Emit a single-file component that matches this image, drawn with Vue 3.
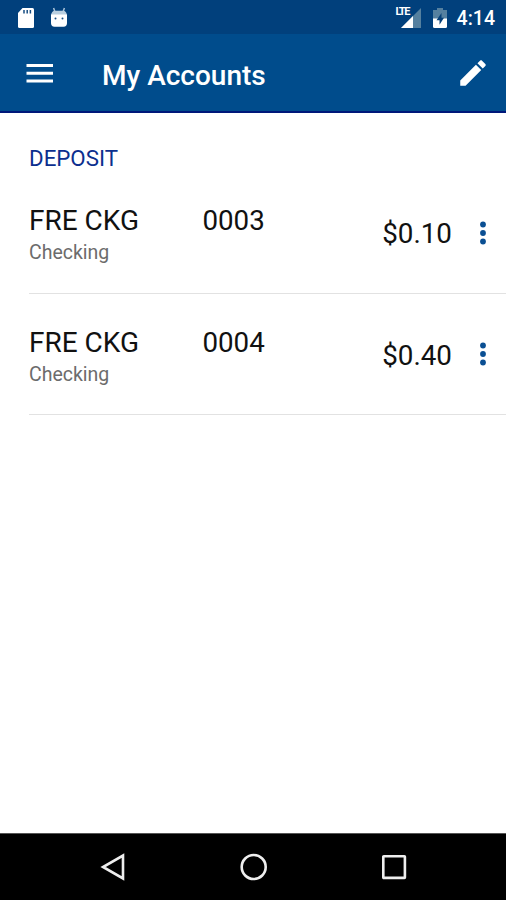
<script setup>
const accounts = [
  { name: 'FRE CKG', number: '0003', type: 'Checking', balance: '$0.10' },
  { name: 'FRE CKG', number: '0004', type: 'Checking', balance: '$0.40' },
]
</script>

<template>
  <div class="screen">
    <div class="status">
      <svg class="sd" width="18" height="22" viewBox="0 0 18 22">
        <path d="M5.500 1H15.500q1.500 0 1.500 1.500V19.500q0 1.500-1.500 1.500H2.500Q1 21 1 19.500V6z" fill="#fff" />
        <path d="M7 3v3.500M10.200 3v3.500M13.400 3v3.500" stroke="#164d83" stroke-width="1.500" />
      </svg>
      <svg class="droid" width="18" height="22" viewBox="0 0 18 22">
        <path d="M5 5L3.600 1M13 5L14.400 1" stroke="#a9c2d8" stroke-width="1.500" />
        <path d="M1 8.500Q1.500 3.800 5 3.800h8q3.500 0 4 4.700z" fill="#b9cfe0" />
        <path d="M1 7.500h16v8.500q0 3.700-3.500 3.700h-9Q1 19.700 1 16z" fill="#fff" />
        <circle cx="5.500" cy="11.500" r="1" fill="#164d83" />
        <circle cx="12.500" cy="11.500" r="1" fill="#164d83" />
      </svg>
      <div class="spacer"></div>
      <div class="signal">
        <svg width="22" height="20" viewBox="0 0 22 20">
          <path d="M21 0V20H1z" fill="#55809f" />
          <path d="M13 8V20H1z" fill="#fff" />
        </svg>
        <span class="lte">LTE</span>
      </div>
      <svg class="battery" width="16" height="22" viewBox="0 0 16 22">
        <path d="M5 1h6v2h4v9H1V3h4z" fill="#55809f" />
        <path d="M1 11.500h14V19.500q0 1.500-1.500 1.500h-11Q1 21 1 19.500z" fill="#fff" />
        <path d="M9.500 6L4.500 13.300h3V17.800L12 10.800H9.500z" fill="#064079" />
      </svg>
      <span class="clock">4:14</span>
    </div>

    <header class="toolbar">
      <svg class="menu" width="28" height="20" viewBox="0 0 28 20">
        <path d="M0.500 2.500h26.500M0.500 10.200h26.500M0.500 17.900h26.500" stroke="#fff" stroke-width="3" />
      </svg>
      <h1 class="title">My Accounts</h1>
      <svg class="pencil" width="34" height="34" viewBox="0 0 24 24">
        <path fill="#fff" d="M3 17.250V21h3.750L17.810 9.940l-3.750-3.750L3 17.250zM20.710 7.040c.39-.39.39-1.020 0-1.410l-2.340-2.340c-.39-.39-1.020-.39-1.410 0l-1.830 1.830 3.750 3.750 1.830-1.830z" />
      </svg>
    </header>

    <main class="content">
      <h2 class="section">DEPOSIT</h2>
      <div v-for="a in accounts" :key="a.number" class="row">
        <div class="info">
          <div class="line">
            <span class="name">{{ a.name }}</span>
            <span class="number">{{ a.number }}</span>
          </div>
          <div class="type">{{ a.type }}</div>
        </div>
        <span class="balance">{{ a.balance }}</span>
        <svg class="more" width="8" height="24" viewBox="0 0 8 24">
          <circle cx="4" cy="3.500" r="2.900" />
          <circle cx="4" cy="12" r="2.900" />
          <circle cx="4" cy="20.500" r="2.900" />
        </svg>
      </div>
    </main>

    <nav class="navbar">
      <svg width="28" height="30" viewBox="0 0 28 30">
        <path d="M24 3.500V26.500L4 15z" />
      </svg>
      <svg width="28" height="30" viewBox="0 0 28 30">
        <circle cx="13.700" cy="15" r="12" />
      </svg>
      <svg width="28" height="30" viewBox="0 0 28 30">
        <rect x="3.300" y="4.300" width="21.600" height="21.600" rx="0.500" />
      </svg>
    </nav>
  </div>
</template>

<style>
body {
  margin: 0;
}
</style>

<style scoped>
.screen {
  width: 506px;
  height: 900px;
  display: flex;
  flex-direction: column;
  background: #fff;
  font-family: Roboto, sans-serif;
  overflow: hidden;
}
svg {
  display: block;
  flex: none;
}
.status {
  height: 34px;
  flex: none;
  display: flex;
  align-items: center;
  background: #01407c;
  box-sizing: border-box;
  padding: 1px 11px 0 17px;
}
.droid {
  margin-left: 15px;
}
.spacer {
  flex: 1;
}
.signal {
  position: relative;
  margin-right: 10px;
}
.lte {
  position: absolute;
  left: -4px;
  top: -1px;
  padding-right: 1px;
  background: #01407c;
  color: #fff;
  font-size: 11px;
  line-height: 9px;
  font-weight: 700;
  letter-spacing: -1.500px;
}
.battery {
  margin-right: 9px;
}
.clock {
  color: #fff;
  font-size: 19.500px;
  font-weight: 500;
  line-height: 34px;
  padding-top: 2px;
}
.toolbar {
  height: 79px;
  flex: none;
  box-sizing: border-box;
  border-bottom: 2px solid #00187a;
  background: #004c8c;
  display: flex;
  align-items: center;
  padding: 1px 16px 0 26px;
}
.title {
  margin: 5px 0 0 48px;
  flex: 1;
  color: #fff;
  font-size: 28px;
  font-weight: 500;
  line-height: 34px;
}
.content {
  flex: 1;
  padding-left: 29px;
}
.section {
  margin: 0;
  height: 59px;
  box-sizing: border-box;
  padding-top: 32px;
  font-size: 22.300px;
  line-height: 27px;
  font-weight: 400;
  color: #0c2f8e;
}
.row {
  height: 121.500px;
  box-sizing: border-box;
  border-bottom: 1.500px solid #e2e2e2;
  display: flex;
  align-items: center;
  padding-right: 19px;
}
.info {
  flex: 1;
  padding-top: 7px;
}
.line {
  display: flex;
  font-size: 28px;
  line-height: 34px;
  color: #111;
}
.name {
  width: 173.500px;
}
.number {
  font-size: 27.700px;
}
.type {
  font-size: 19.500px;
  line-height: 29px;
  color: #6c6c6c;
}
.balance {
  font-size: 27.800px;
  line-height: 34px;
  color: #111;
  padding-top: 4px;
}
.more {
  margin-left: 27px;
  margin-top: 1px;
  fill: #0a4f93;
}
.navbar {
  height: 67px;
  flex: none;
  box-sizing: border-box;
  border-top: 1px solid #555;
  background: #000;
  display: flex;
  align-items: center;
  justify-content: space-between;
  padding: 0 98px 1px 99px;
}
.navbar svg {
  fill: none;
  stroke: #eee;
  stroke-width: 2.600;
}
</style>
